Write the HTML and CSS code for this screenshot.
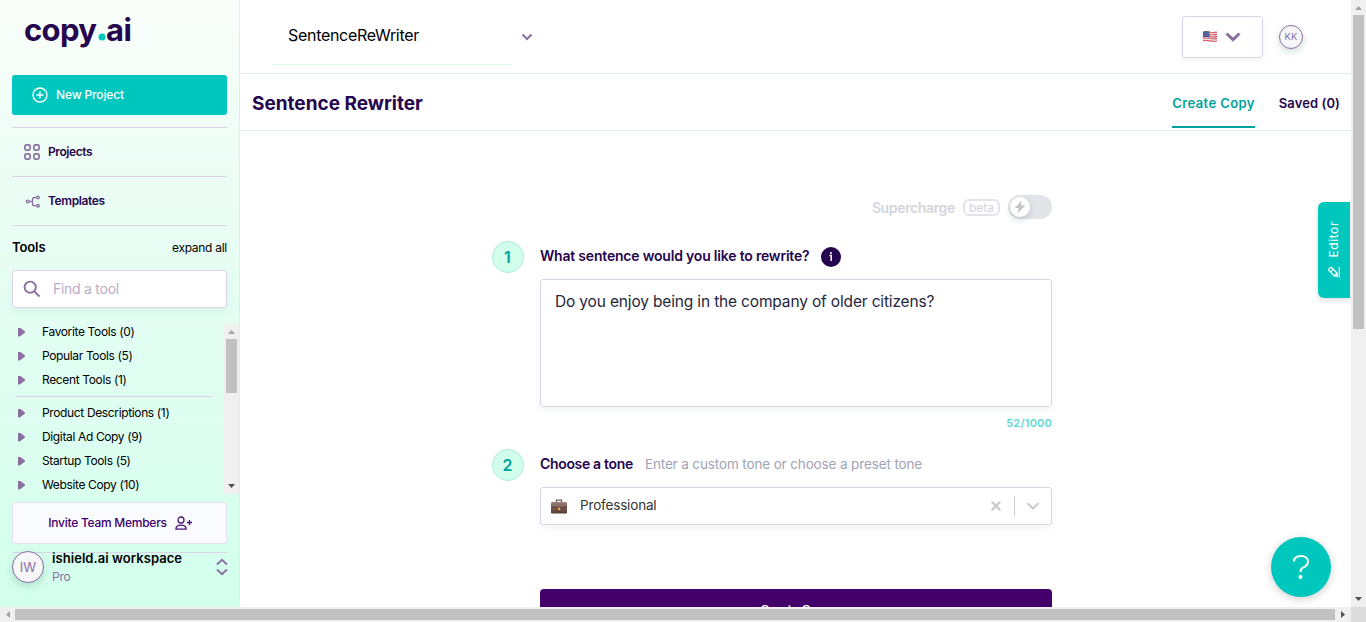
FILE: index.html
```html
<!DOCTYPE html>
<html lang="en">
<head>
<meta charset="utf-8">
<title>Sentence Rewriter</title>
<link rel="stylesheet" href="styles.css">
</head>
<body>
<div class="window">
  <div class="app">
    <aside class="sidebar">
      <div class="logo">
        <svg width="120" height="48" viewBox="20 8 120 48">
          <text class="logo-text" x="24" y="41" textLength="73">copy</text>
          <circle cx="102" cy="37" r="3.5" fill="#00c7be"/>
          <text class="logo-text" x="106" y="41" textLength="26">ai</text>
        </svg>
      </div>
      <button class="new-project">
        <svg width="16" height="16" viewBox="0 0 16 16" fill="none" stroke="#fff" stroke-width="1.4"><circle cx="8" cy="8" r="7"/><path d="M8 4.500v7M4.500 8h7"/></svg>
        <span>New Project</span>
      </button>
      <nav class="nav">
        <a class="nav-row"><svg width="16" height="16" viewBox="0 0 16 16" fill="none" stroke="#8a70a0" stroke-width="1.700"><rect x=".9" y=".9" width="5.200" height="5.200" rx="1.500"/><rect x="9.900" y=".9" width="5.200" height="5.200" rx="1.500"/><rect x=".9" y="9.900" width="5.200" height="5.200" rx="1.500"/><rect x="9.900" y="9.900" width="5.200" height="5.200" rx="1.500"/></svg><span>Projects</span></a>
        <a class="nav-row"><svg width="16" height="16" viewBox="0 0 16 16" fill="none" stroke="#8a70a0" stroke-width="1.300"><circle cx="3.700" cy="8.500" r="1.400"/><circle cx="14" cy="4.500" r="1.300"/><circle cx="14" cy="12.700" r="1.300"/><path d="M5.200 8.500h3.300M12.700 4.500h-2.200q-2 0-2 2v4.200q0 2 2 2h2.200"/></svg><span>Templates</span></a>
      </nav>
      <div class="tools-head"><b>Tools</b><span>expand all</span></div>
      <div class="search">
        <svg width="18" height="18" viewBox="0 0 18 18" fill="none" stroke="#8a70a0" stroke-width="1.900"><circle cx="7.200" cy="7.200" r="5.600"/><path d="M11.300 11.300l5.200 5.200"/></svg>
        <span>Find a tool</span>
      </div>
      <div class="tool-area">
        <ul class="tool-list">
          <li><i></i><span>Favorite Tools (0)</span></li>
          <li><i></i><span>Popular Tools (5)</span></li>
          <li><i></i><span>Recent Tools (1)</span></li>
          <li class="rule"></li>
          <li><i></i><span>Product Descriptions (1)</span></li>
          <li><i></i><span>Digital Ad Copy (9)</span></li>
          <li><i></i><span>Startup Tools (5)</span></li>
          <li><i></i><span>Website Copy (10)</span></li>
        </ul>
        <div class="bar list-bar"><i class="arrow up dim"></i><div class="thumb"></div><i class="arrow down"></i></div>
      </div>
      <button class="invite">
        <span>Invite Team Members</span>
        <svg width="17" height="14" viewBox="0 0 17 14" fill="none" stroke="#4b1173" stroke-width="1.300"><circle cx="6" cy="4" r="3"/><path d="M.9 13.200c0-3 2-4 5.100-4s5.100 1 5.100 4zM12 6.500h5M14.500 4v5"/></svg>
      </button>
      <div class="workspace">
        <div class="ws-avatar">IW</div>
        <div class="ws-name"><b>ishield.ai workspace</b><span>Pro</span></div>
        <svg width="12" height="18" viewBox="0 0 12 18" fill="none" stroke="#8a70a0" stroke-width="1.900"><path d="M1 6.500L6 1.700l5 4.800M1 11.500l5 4.800 5-4.800"/></svg>
      </div>
    </aside>
    <main class="main">
      <header class="topbar">
        <div class="project"><span>SentenceReWriter</span></div>
        <svg class="project-chev" width="12" height="8" viewBox="0 0 12 8" fill="none" stroke="#8a70a0" stroke-width="2"><path d="M1.500 1.500L6 6l4.500-4.500"/></svg>
        <div class="lang">
          <svg width="16" height="13" viewBox="0 0 16 13"><path d="M1 1.500q3-1.200 7 0t7-.2v10.200q-3 1.200-7 0t-7 .2z" fill="#eee"/><path d="M7 2q4 1.300 8 .2M7 4.200q4 1.300 8 .2M7 6.400q4 1.300 8 .2M1 8.500q3-1 7 0t7-.1M1 10.800q3-1 7 0t7-.1" fill="none" stroke="#d8606a" stroke-width="1.200"/><path d="M1 1.500q3-1 6.500-.1v6q-3.500-.8-6.500 0z" fill="#49558d"/><path d="M2 3h5M2 5h5" stroke="#a8adcc" stroke-width=".6" stroke-dasharray=".7 .7"/></svg>
          <svg width="16" height="10" viewBox="0 0 16 10" fill="none" stroke="#8a70a0" stroke-width="3"><path d="M1.500 1.500L8 7.600l6.500-6.100"/></svg>
        </div>
        <div class="user">KK</div>
      </header>
      <div class="titlebar">
        <h1>Sentence Rewriter</h1>
        <div class="tabs"><span class="active">Create Copy</span><span>Saved (0)</span></div>
      </div>
      <section class="form">
        <div class="supercharge">
          <b>Supercharge</b><span class="beta">beta</span>
          <div class="toggle"><div class="knob"><svg width="12" height="14" viewBox="0 0 12 14"><path d="M7.800.5L.7 8h4L3.500 13.500 11.200 5.500H7z" fill="#c4c4c8"/></svg></div></div>
        </div>
        <div class="step first">
          <div class="num">1</div>
          <div class="field">
            <div class="label"><b class="question">What sentence would you like to rewrite?</b><svg width="20" height="20" viewBox="0 0 20 20"><circle cx="10" cy="10" r="10" fill="#25054d"/><path d="M8.500 8.500h1.700V14" fill="none" stroke="#fff" stroke-width="1.500"/><circle cx="10" cy="6" r="1" fill="#fff"/></svg></div>
            <div class="textbox">Do you enjoy being in the company of older citizens?</div>
            <div class="count">52/1000</div>
          </div>
        </div>
        <div class="step second">
          <div class="num">2</div>
          <div class="field">
            <div class="label"><b class="choose">Choose a tone</b><span class="hint">Enter a custom tone or choose a preset tone</span></div>
            <div class="select">
              <svg width="16" height="15" viewBox="0 0 16 15"><defs><linearGradient id="leather" x2="0" y2="1"><stop stop-color="#9c8179"/><stop offset="1" stop-color="#543831"/></linearGradient></defs><path d="M5.500 3V1.200h5V3" fill="none" stroke="#705d58" stroke-width="1.300"/><rect x="0" y="3" width="16" height="11.500" rx="1.300" fill="url(#leather)"/><path d="M0 7.500q8 2.500 16 0v.7q-8 2.500-16 0z" fill="#49302b"/><rect x="7" y="8.800" width="2.200" height="2.200" rx=".6" fill="#f1b32a"/></svg>
              <span class="value">Professional</span>
              <svg width="10" height="10" viewBox="0 0 10 10" stroke="#ccc" stroke-width="2.400" stroke-linecap="round"><path d="M1.400 1.400l7.200 7.200M8.600 1.400L1.400 8.600"/></svg>
              <i class="divider"></i>
              <svg width="12" height="8" viewBox="0 0 12 8" fill="none" stroke="#ccc" stroke-width="2.200" stroke-linecap="round"><path d="M1.200 1.800L6 6.500l4.800-4.700"/></svg>
            </div>
          </div>
        </div>
        <button class="create">Create Copy</button>
      </section>
    </main>
    <div class="editor"><svg width="12" height="12" viewBox="0 0 12 12" fill="none" stroke="#fff" stroke-width="1.200"><path d="M11.300 1v10.500M9.300 10.300l-3-.4L1 4.600q-.8-.9 0-1.800l1-1q.9-.8 1.800 0l5.200 5.300zM2.600 5.800l2.800-2.900M6.300 9.700l2.500-2.600"/></svg><span>Editor</span></div>
    <div class="help"><svg width="18" height="26" viewBox="0 0 18 26" fill="none" stroke="#fff" stroke-width="2"><path d="M2 7.500C2 3.800 5 2 9 2s7 2 7 5.500-2.500 5-5 6.200c-1.800.9-2.500 1.700-2.500 4.300"/><circle cx="8.500" cy="23" r="2" fill="#fff" stroke="none"/></svg></div>
  </div>
  <div class="bar page-v"><i class="arrow up dim"></i><div class="thumb"></div><i class="arrow down"></i></div>
  <div class="bar page-h"><i class="arrow left dim"></i><div class="thumb"></div><i class="arrow right"></i></div>
  <div class="corner"></div>
</div>
</body>
</html>
```
FILE: styles.css
```css
* { box-sizing: border-box; }
body { margin: 0; font-family: Inter, "Liberation Sans", sans-serif; color: #000; overflow: hidden; }
button { font: inherit; border: 0; padding: 0; }
svg { flex: none; display: block; }
span, b { white-space: nowrap; }
.window { display: grid; grid-template: 607px 15px / 1351px 15px; width: 1366px; height: 622px; }
.app { position: relative; display: grid; grid-template-columns: 240px 1fr; overflow: hidden; background: #fff; }

.sidebar { display: flex; flex-direction: column; height: 607px; padding: 0 12px; border-right: 1px solid #dcefe9; background: linear-gradient(#fafefb, #ecfdf6 30%, #d2ffec); }
.logo { height: 75px; padding: 8px 0 0 8px; flex: none; }
.logo-text { font-size: 31px; font-weight: 700; fill: #25054d; }
.new-project { display: flex; align-items: center; gap: 8px; height: 40px; padding-left: 20px; flex: none; border-radius: 3px; background: #00c7be; color: #fff; font-size: 12px; font-weight: 500; letter-spacing: -.15px; }
.nav { margin-top: 12px; border-bottom: 1px solid #dcd3e8; }
.nav-row { display: flex; align-items: center; gap: 8px; height: 49px; padding-left: 12px; border-top: 1px solid #dcd3e8; font-size: 12px; font-weight: 600; letter-spacing: -.4px; color: #25054d; }
.tools-head { display: flex; align-items: center; justify-content: space-between; height: 44px; padding-bottom: 2px; font-size: 12px; letter-spacing: -.28px; }
.tools-head b { font-size: 13px; font-weight: 600; letter-spacing: -.1px; }
.search { display: flex; align-items: center; gap: 12px; height: 38px; padding-left: 10px; flex: none; border: 1px solid #dcd3e8; border-radius: 3px; background: #fff; color: #b9adc8; font-size: 14px; letter-spacing: -.27px; box-shadow: 0 4px 10px #0a5a4610; }
.new-project span, .nav-row span, .search span, .tool-list span, .invite span, .project span, .value { padding-bottom: 2px; }
.tool-area { display: flex; height: 174px; margin: 12px -12px 0 0; overflow: hidden; flex: none; }
.tool-list { flex: 1; margin: 0; padding: 0; list-style: none; font-size: 12px; letter-spacing: -.36px; }
.tool-list li { display: flex; align-items: center; height: 24px; }
.tool-list li i { width: 7px; height: 9px; margin: 0 17px 0 6px; background: #8a70a0; clip-path: polygon(0 0, 25% 0, 100% 45%, 100% 55%, 25% 100%, 0 100%); }
.tool-list .rule { height: 1px; margin: 4px 12px 4px 4px; background: #e0cfe8; }
.invite { display: flex; align-items: center; justify-content: center; gap: 8px; height: 42px; margin-top: 8px; padding-left: 1px; flex: none; border: 1px solid #e4dfee; border-radius: 3px; background: #fafbfe; color: #43006b; font-size: 12px; font-weight: 500; letter-spacing: -.26px; }
.workspace { display: flex; align-items: flex-start; margin-top: 8px; height: 40px; border-top: 1px solid #dcd3e8; }
.workspace > svg { margin: 5px -1px 0 auto; }
.ws-avatar, .user, .num { display: flex; align-items: center; justify-content: center; border-radius: 50%; flex: none; }
.ws-avatar { width: 32px; height: 32px; margin-top: -2px; border: 1px solid #8a70a0; background: #f7f7fa; color: #8a70a0; font-size: 13px; box-shadow: 0 3px 7px #0a5a4630; }
.ws-name { display: flex; flex-direction: column; margin-left: 8px; }
.ws-name b { font-size: 13px; font-weight: 600; line-height: 10px; letter-spacing: .06px; }
.ws-name span { margin-top: 6px; font-size: 12px; line-height: 15px; letter-spacing: -.2px; color: #8a70a0; }

.main { display: flex; flex-direction: column; min-width: 0; }
.topbar { display: flex; align-items: center; height: 74px; flex: none; border-bottom: 1px solid #dcefe4; }
.project { display: flex; align-items: center; width: 240px; height: 57px; margin: 0 0 1px 32px; padding-left: 16px; border-bottom: 1px solid #e1f7e8; font-size: 16px; letter-spacing: -.3px; }
.project-chev { margin-left: 9px; }
.lang { display: flex; align-items: center; gap: 7px; width: 81px; height: 42px; margin-left: auto; padding-left: 19px; border: 1px solid #dcd3e8; border-radius: 3px; box-shadow: 0 3px 7px #0a5a4610; }
.user { width: 24px; height: 24px; margin: 0 48px 0 16px; border: 1px solid #8a70a0; background: #f7f7fa; color: #8a70a0; font-size: 9.500px; box-shadow: 0 3px 7px #0a5a4630; }
.titlebar { display: flex; justify-content: space-between; height: 57px; padding: 0 12px; flex: none; border-bottom: 1px solid #dcefe4; }
h1 { margin: 0; font-size: 19px; line-height: 60px; font-weight: 700; color: #25054d; }
.tabs { display: flex; gap: 24px; height: 54px; margin-right: -1px; font-size: 13px; font-weight: 600; line-height: 58px; letter-spacing: .08px; color: #25054d; }
.active { color: #00a39b; border-bottom: 2px solid #00a39b; letter-spacing: .4px; }
.form { width: 560px; margin: 64px 0 0 252px; }
.supercharge { display: flex; align-items: center; justify-content: flex-end; height: 24px; color: #d3d4de; font-size: 14px; }
.supercharge b { font-weight: 600; letter-spacing: -.36px; }
.beta { margin: 0 8px; padding: 1px 4px 0; border: 2px solid #e3e3eb; border-radius: 6px; font-size: 12px; line-height: 12px; }
.toggle { width: 44px; height: 24px; padding: 2px; border-radius: 12px; background: #e3e3ea; }
.knob { display: flex; align-items: center; justify-content: center; width: 20px; height: 20px; border-radius: 50%; background: #fff; box-shadow: 0 3px 6px #0a5a4630; }
.step { display: flex; gap: 16px; }
.first { margin-top: 22px; }
.second { margin-top: 16px; }
.num { width: 32px; height: 32px; padding-right: 1px; border: 1px solid #abeade; background: #d2ffec; color: #00a39b; font-size: 16px; font-weight: 600; }
.field { width: 512px; }
.label { display: flex; align-items: center; height: 32px; font-size: 14px; color: #25054d; }
.label b { font-weight: 600; padding-bottom: 3px; }
.question { letter-spacing: -.2px; }
.choose { letter-spacing: -.33px; }
.label svg { margin-left: 12px; }
.hint { margin-left: 12px; padding-bottom: 2px; color: #a0a3b5; font-size: 13.500px; letter-spacing: -.13px; }
.textbox { height: 128px; margin-top: 6px; padding: 12px 14px; border: 1px solid #dcd3e8; border-radius: 3px; font-size: 15.500px; line-height: 20px; letter-spacing: -.16px; color: #26263c; white-space: nowrap; box-shadow: 0 3px 8px #0a5a4610; }
.count { height: 26px; line-height: 32px; text-align: right; color: #5fd8d1; font-size: 11px; font-weight: 600; letter-spacing: .2px; }
.select { display: flex; align-items: center; height: 38px; margin-top: 6px; padding: 0 12px 0 10px; border: 1px solid #dcd3e8; border-radius: 3px; color: #333; font-size: 13.500px; letter-spacing: -.17px; box-shadow: 0 3px 8px #0a5a4610; }
.value { margin: 0 auto 0 13px; }
.divider { width: 1px; height: 20px; margin: 0 12px 0 13px; background: #ccc; }
.create { display: block; width: 512px; height: 40px; margin: 64px 0 0 48px; border-radius: 4px; background: #43006b; color: #fff; font-size: 13px; font-weight: 500; line-height: 42px; letter-spacing: -.5px; }

.editor { position: absolute; right: 1px; top: 202px; display: flex; flex-direction: column-reverse; align-items: center; gap: 8px; width: 32px; height: 96px; padding-bottom: 20px; border-radius: 6px 0 0 6px; background: #00c7be; color: #fff; font-size: 12px; box-shadow: 0 2px 6px #0002; }
.editor span { writing-mode: vertical-rl; transform: rotate(180deg); line-height: 14px; letter-spacing: .6px; }
.help { position: absolute; right: 20px; top: 537px; display: flex; align-items: center; justify-content: center; width: 60px; height: 60px; border-radius: 50%; background: #00c7be; box-shadow: 0 2px 8px #0003; }

.bar { display: flex; flex-direction: column; align-items: center; background: #f0f0f0; }
.bar .thumb { background: #c1c1c1; }
.list-bar { width: 15px; height: 170px; margin-top: 4px; padding: 6px 0; }
.list-bar .thumb { width: 11px; height: 54px; margin-top: 5px; }
.page-v { padding: 6px 0; }
.page-v .thumb { width: 11px; height: 314px; margin-top: 5px; }
.page-h { flex-direction: row; padding: 0 6px; }
.page-h .thumb { width: 1320px; height: 11px; margin-left: 5px; }
.corner { background: #dcdcdc; }
.arrow { width: 7px; height: 4px; background: #505050; flex: none; }
.up { clip-path: polygon(50% 0, 100% 100%, 0 100%); }
.down { margin-top: auto; clip-path: polygon(0 0, 100% 0, 50% 100%); }
.left, .right { width: 4px; height: 7px; }
.left { clip-path: polygon(0 50%, 100% 0, 100% 100%); }
.right { margin-left: auto; clip-path: polygon(0 0, 100% 50%, 0 100%); }
.dim { background: #a3a3a3; }
```
